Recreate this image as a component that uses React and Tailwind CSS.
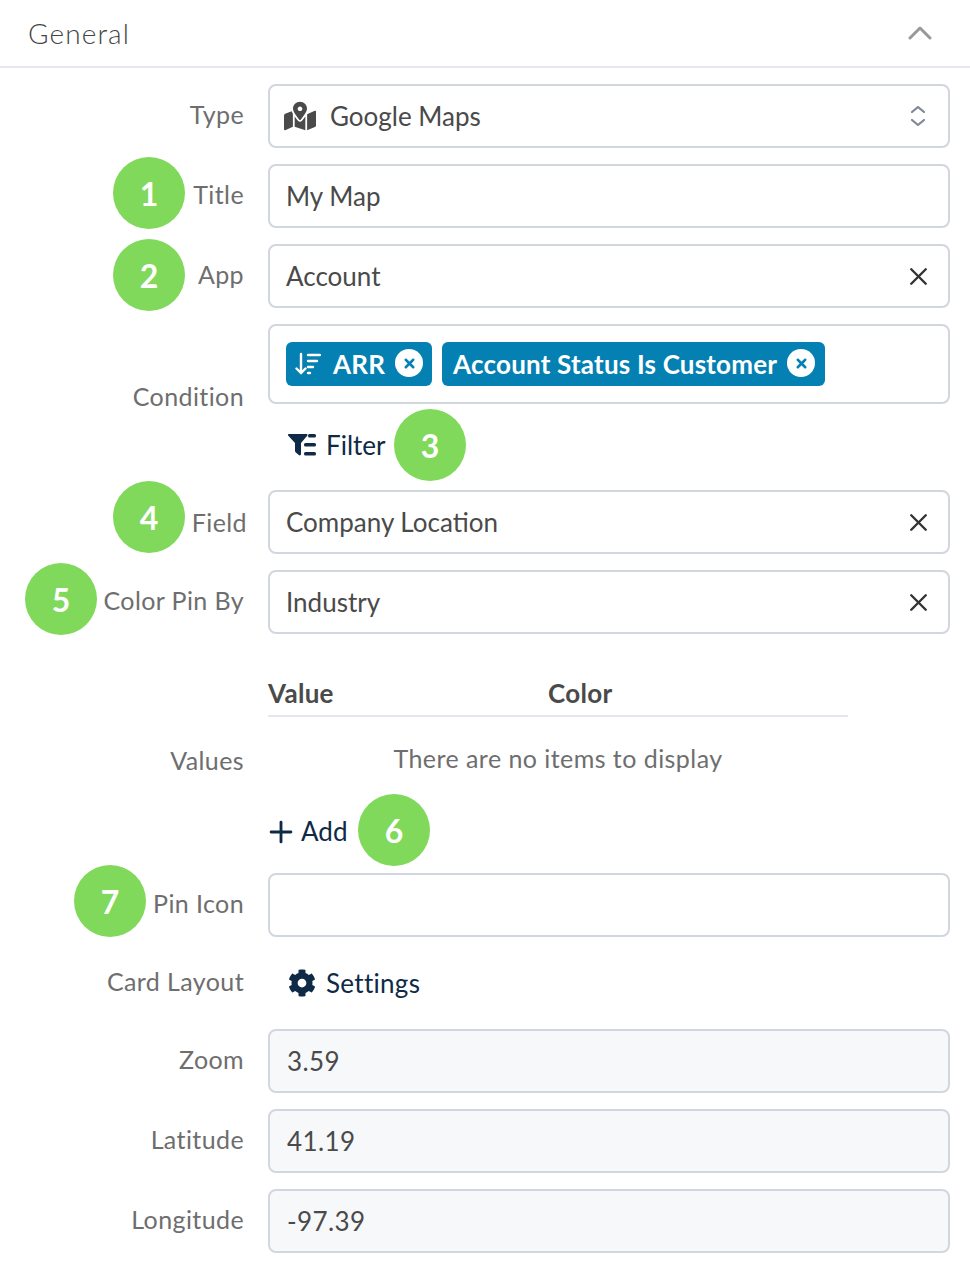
import { X, Plus } from "lucide-react";
import { FaMapMarkedAlt, FaCog } from "react-icons/fa";

const fieldBox = "flex h-16 items-center rounded-lg border-2 border-[#d2d6de] px-4 text-[26px] text-[#4a4a4a]";
const readonlyBox = "flex h-16 items-center rounded-lg border-2 border-[#d2d6de] bg-[#f7f8fa] pl-[17px] pr-4 text-[26px] tracking-[0.4px] text-[#4a4a4a]";

// Numbered callout laid over the form.
function Badge({ n, className }) {
  return (
    <span className={`absolute flex size-[72px] items-center justify-center rounded-full bg-[#80d95a] pt-[2px] text-[32px] font-bold text-white ${className}`}>
      {n}
    </span>
  );
}

function Row({ label, labelClass = "-translate-y-[1px]", badge, children, className = "" }) {
  return (
    <div className={`relative flex items-center ${className}`}>
      <div className={`w-[244px] shrink-0 text-right text-[25px] tracking-[0.4px] text-[#6e6e6e] ${labelClass}`}>{label}</div>
      <div className="ml-6 w-[682px]">{children}</div>
      {badge}
    </div>
  );
}

function ClearField({ value }) {
  return (
    <div className={`${fieldBox} justify-between`}>
      <span>{value}</span>
      <X className="-mr-[1px] size-[29px] text-[#333]" strokeWidth={2} />
    </div>
  );
}

function ChipClose() {
  return (
    <span className="flex size-[28px] -translate-y-[1px] items-center justify-center rounded-full bg-white">
      <X className="size-[15px] text-[#0580b2]" strokeWidth={4} />
    </span>
  );
}

function SortIcon() {
  return (
    <svg viewBox="0 0 26 24" className="mr-[2px] h-6 w-[26px]" fill="none" stroke="#fff" strokeWidth="2.4" strokeLinecap="round">
      <path d="M6 2v19M1.500 16.500 6 21l4.500-4.500" />
      <path d="M13 3h12M13 9h9M13 15h5M13 21h2" />
    </svg>
  );
}

function FilterIcon() {
  return (
    <svg viewBox="0 0 28 22" className="h-[22px] w-[28px]" fill="#0f2a47">
      <path d="M1 0h17.500c.9 0 1.300 1 .7 1.700L13 9v11c0 1.200-1.300 1.800-2.200 1.100l-3-2.500c-.5-.4-.8-.9-.8-1.500V9L.3 1.700C-.3 1 .1 0 1 0z" />
      <rect x="20" y="0" width="8" height="3.500" rx="1.500" />
      <rect x="16" y="9" width="12" height="3.500" rx="1.500" />
      <rect x="16" y="18" width="12" height="3.500" rx="1.500" />
    </svg>
  );
}

export default function App() {
  return (
    <div className="h-[1282px] w-[970px] overflow-hidden bg-white font-['Lato',sans-serif]">
      <div className="flex h-[68px] items-center justify-between border-b-2 border-[#e6e7ec] pl-[28px] pr-[38px]">
        <span className="text-[28px] font-light tracking-[1.1px] text-[#444]">General</span>
        <svg viewBox="0 0 24 14" className="h-[14px] w-[24px]" fill="none" stroke="#999" strokeWidth="3" strokeLinecap="round" strokeLinejoin="round">
          <path d="M2 12 12 2l10 10" />
        </svg>
      </div>

      <div className="flex flex-col gap-4 pt-4">
        <Row label="Type">
          <div className={`${fieldBox} justify-between`}>
            <span className="flex items-center gap-[14px]">
              <FaMapMarkedAlt className="-ml-[2px] size-8 text-[#4a4a4a]" />
              Google Maps
            </span>
            <svg viewBox="0 0 16 24" className="mr-[6px] h-6 w-4" fill="none" stroke="#7f8794" strokeWidth="2.200" strokeLinecap="round" strokeLinejoin="round">
              <path d="M2 8l6-5 6 5M2 16l6 5 6-5" />
            </svg>
          </div>
        </Row>
        <Row label="Title" badge={<Badge n="1" className="left-[113px] top-[-7px]" />}>
          <div className={fieldBox}>My Map</div>
        </Row>
        <Row label="App" badge={<Badge n="2" className="left-[113px] top-[-5px]" />}>
          <ClearField value="Account" />
        </Row>
        <Row label="Condition" labelClass="-translate-y-[2px]" badge={<Badge n="3" className="left-[394px] top-[85px]" />}>
          <div className="flex h-20 items-center gap-[10px] rounded-lg border-2 border-[#d2d6de] px-4">
            <span className="flex h-11 items-center gap-[10px] rounded-md bg-[#0580b2] pl-[9px] pr-[9px] text-[26px] font-bold tracking-[0.2px] text-white">
              <SortIcon />
              ARR
              <ChipClose />
            </span>
            <span className="flex h-11 items-center gap-[10px] rounded-md bg-[#0580b2] pl-[11px] pr-[10px] text-[26px] font-bold tracking-[0.2px] text-white">
              Account Status Is Customer
              <ChipClose />
            </span>
          </div>
          <div className="flex h-[70px] items-center gap-[10px] pl-5 pt-3 text-[26px] text-[#0f2a47]">
            <FilterIcon />
            Filter
          </div>
        </Row>
        <Row label="Field" labelClass="translate-x-[3px] translate-y-[1px]" badge={<Badge n="4" className="left-[113px] top-[-9px]" />}>
          <ClearField value="Company Location" />
        </Row>
        <Row label="Color Pin By" badge={<Badge n="5" className="left-[25px] top-[-7px]" />}>
          <ClearField value="Industry" />
        </Row>

        <Row label="Values" labelClass="translate-y-[1px]" className="mt-[13px]" badge={<Badge n="6" className="left-[358px] top-[131px]" />}>
          <div className="grid h-[54px] w-[580px] grid-cols-[280px_300px] items-center border-b-2 border-[#e6e7ec] pt-2 text-[26px] font-bold tracking-[0.3px] text-[#4a4a4a]">
            <span>Value</span>
            <span>Color</span>
          </div>
          <div className="flex h-[84px] w-[580px] items-center justify-center text-[25px] tracking-[0.45px] text-[#6e6e6e]">
            There are no items to display
          </div>
          <div className="flex h-[56px] items-center gap-[3px] pt-[5px] text-[26px] text-[#0f2a47]">
            <Plus className="-ml-[4px] size-[34px]" strokeWidth={2} />
            Add
          </div>
        </Row>
        <Row label="Pin Icon" badge={<Badge n="7" className="left-[74px] top-[-8px]" />}>
          <div className={fieldBox} />
        </Row>
        <Row label="Card Layout">
          <div className="flex h-[60px] items-center gap-[10px] pl-5 text-[26px] tracking-[0.3px] text-[#0f2a47]">
            <FaCog className="size-[28px]" />
            Settings
          </div>
        </Row>
        <Row label="Zoom">
          <div className={readonlyBox}>3.59</div>
        </Row>
        <Row label="Latitude">
          <div className={readonlyBox}>41.19</div>
        </Row>
        <Row label="Longitude">
          <div className={readonlyBox}>-97.39</div>
        </Row>
      </div>
    </div>
  );
}
